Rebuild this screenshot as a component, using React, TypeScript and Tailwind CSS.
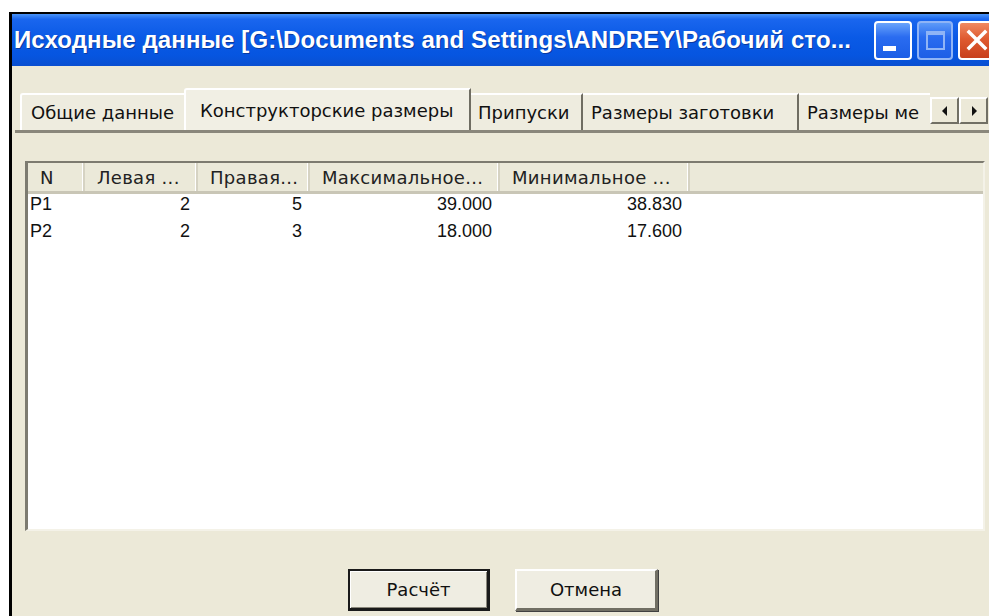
import React from "react";

const ui = { fontFamily: '"DejaVu Sans", "Noto Sans", sans-serif' };
const titleFont = { fontFamily: '"Liberation Sans", Arial, sans-serif' };
const cellFont = { fontFamily: '"Liberation Sans", Arial, sans-serif' };

type Col = { label: string; w: number; align: "left" | "right" };

const columns: Col[] = [
  { label: "N", w: 57, align: "left" },
  { label: "Левая ...", w: 113, align: "right" },
  { label: "Правая...", w: 112, align: "right" },
  { label: "Максимальное...", w: 190, align: "right" },
  { label: "Минимальное ...", w: 190, align: "right" },
];

const rows = [
  ["P1", "2", "5", "39.000", "38.830"],
  ["P2", "2", "3", "18.000", "17.600"],
];

function TitleBar() {
  return (
    <div className="h-[52px] flex items-center bg-[linear-gradient(to_bottom,#4a94f7_0%,#1a66ee_10%,#0a5ae6_45%,#0655e0_80%,#0a4fd0_100%)]">
      <div
        className="pl-[2px] text-white font-bold text-[24px] whitespace-nowrap tracking-[0.1px] [text-shadow:1px_1px_0_#0a3aa0]"
        style={titleFont}
      >
        Исходные данные [G:\Documents and Settings\ANDREY\Рабочий сто...
      </div>
      <div className="ml-auto flex items-center gap-[5px] pr-[3px]">
        {/* minimize */}
        <div className="relative w-[38px] h-[39px] rounded-[4px] border-2 border-white bg-[linear-gradient(to_bottom,#6aa4fb,#2a6cf0_40%,#1c5ee6)]">
          <div className="absolute left-[7px] bottom-[7px] w-[13px] h-[5px] bg-white" />
        </div>
        {/* maximize (disabled) */}
        <div className="relative w-[36px] h-[39px] rounded-[4px] border-2 border-[#8fb4f6] bg-[linear-gradient(to_bottom,#5d9af8,#2a6cf0_40%,#1c5ee6)]">
          <div className="absolute left-[7px] top-[8px] w-[19px] h-[19px] border-2 border-t-[4px] border-[#8fb4f6]" />
        </div>
        {/* close */}
        <div className="relative w-[38px] h-[39px] rounded-[4px] border-2 border-white bg-[linear-gradient(to_bottom,#f08a62,#df5a30_45%,#c8401c)] flex items-center justify-center">
          <svg width="24" height="24" viewBox="0 0 24 24">
            <path d="M4 4 L20 20 M20 4 L4 20" stroke="white" strokeWidth="3.5" strokeLinecap="square" />
          </svg>
        </div>
      </div>
    </div>
  );
}

const tabText = "text-[18px] text-[#111] whitespace-nowrap";

function ArrowBtn({ dir }: { dir: "left" | "right" }) {
  return (
    <div className="w-[29px] h-[27px] flex items-center justify-center bg-[#ece9d8] border-t-2 border-l-2 border-white border-r-2 border-b-2 border-r-[#716f64] border-b-[#716f64]">
      <svg width="8" height="10" viewBox="0 0 8 10">
        {dir === "left" ? (
          <path d="M6 0 L6 10 L1 5 Z" fill="#111" />
        ) : (
          <path d="M2 0 L2 10 L7 5 Z" fill="#111" />
        )}
      </svg>
    </div>
  );
}

function TabStrip() {
  return (
    <div className="mt-[22px] ml-[3px] h-[45px] flex items-end border-b-[3px] border-[#8a877b]">
      <div className="w-[5px]" />
      <div className={`h-[37px] w-[164px] flex items-center pl-[9px] border-l-2 border-t-2 border-white bg-[#eeecdf] rounded-tl-[3px] ${tabText}`}>
        Общие данные
      </div>
      <div className={`h-[42px] w-[287px] flex items-center pl-[14px] border-l-2 border-t-2 border-white border-r-2 border-r-[#6f6d62] bg-[#f1efe4] rounded-tl-[3px] ${tabText}`}>
        Конструкторские размеры
      </div>
      <div className={`h-[37px] w-[112px] flex items-center pl-[7px] border-t-2 border-white border-r-2 border-r-[#6f6d62] bg-[#eeecdf] ${tabText}`}>
        Припуски
      </div>
      <div className={`h-[37px] w-[216px] flex items-center pl-[8px] border-t-2 border-white border-r-2 border-r-[#6f6d62] bg-[#eeecdf] ${tabText}`}>
        Размеры заготовки
      </div>
      <div className={`h-[37px] w-[131px] flex items-center pl-[8px] border-t-2 border-white bg-[#eeecdf] ${tabText}`}>
        Размеры ме
      </div>
      <div className="self-start mt-[9px] flex">
        <ArrowBtn dir="left" />
        <ArrowBtn dir="right" />
      </div>
    </div>
  );
}

function ListView() {
  return (
    <div className="mt-[28px] ml-[13px] w-[960px] h-[370px] bg-white border-l-[3px] border-t-2 border-[#7d7b70] border-r-2 border-r-[#f4f2e8] border-b-2 border-b-[#f4f2e8] flex flex-col">
      <div className="h-[31px] flex bg-[#ebe9d9] border-b-[3px] border-[#c9c6b6]">
        {columns.map((c) => (
          <div
            key={c.label}
            className="h-full flex items-center pl-[12px] text-[18px] tracking-[0.3px] text-[#222] whitespace-nowrap border-r-2 border-r-[#d6d3c3] shadow-[inset_-1px_0_0_#ffffff]"
            style={{ width: c.w }}
          >
            {c.label}
          </div>
        ))}
        <div className="flex-1" />
      </div>
      <div>
        {rows.map((r) => (
          <div key={r[0]} className="h-[27px] flex items-start text-[18px] leading-[21px] text-[#111]" style={cellFont}>
            {r.map((cell, i) => (
              <div
                key={i}
                className={
                  columns[i].align === "left"
                    ? "pl-[2px] whitespace-nowrap"
                    : "text-right pr-[8px] whitespace-nowrap"
                }
                style={{ width: columns[i].w }}
              >
                {cell}
              </div>
            ))}
          </div>
        ))}
      </div>
    </div>
  );
}

function Buttons() {
  return (
    <div className="mt-[38px] pl-[336px] flex gap-[25px]">
      <div className="w-[142px] h-[42px] border-2 border-[#1a1a1a] border-r-[3px] border-b-[3px] bg-[#efede2] flex items-center justify-center text-[18px] text-[#111] shadow-[inset_1px_1px_0_#ffffff,inset_-1px_-1px_0_#8a877b]">
        Расчёт
      </div>
      <div className="w-[143px] h-[42px] border-t-2 border-l-2 border-white border-r-[3px] border-b-[3px] border-r-[#716f64] border-b-[#716f64] bg-[#efede2] flex items-center justify-center text-[18px] text-[#111] shadow-[1px_1px_0_#404040]">
        Отмена
      </div>
    </div>
  );
}

export default function App() {
  return (
    <div className="w-[989px] h-[616px] bg-white pt-[12px] pl-[9px] overflow-hidden" style={ui}>
      <div className="w-[990px] h-[616px] border-l-[3px] border-t-2 border-black flex flex-col">
        <TitleBar />
        <div className="flex-1 bg-[#ece9d8] flex flex-col">
          <TabStrip />
          <ListView />
          <Buttons />
        </div>
      </div>
    </div>
  );
}
